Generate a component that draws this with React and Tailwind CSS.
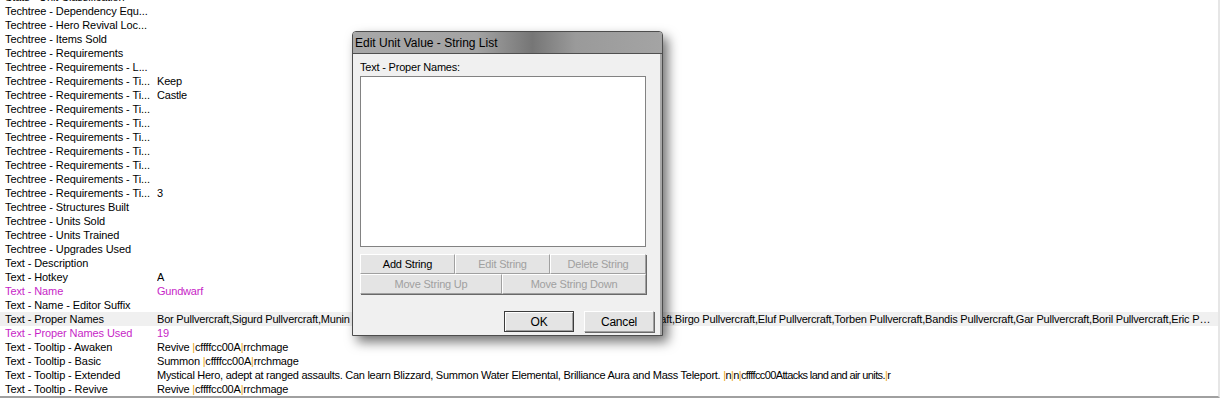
import React from "react";

const MAG = "text-[#c71fc7]";

function Piped({ text }) {
  const parts = text.split("|");
  return (
    <>
      {parts.map((p, i) => (
        <React.Fragment key={i}>
          {i > 0 && <span className="text-[#e8a317]">|</span>}
          {p}
        </React.Fragment>
      ))}
    </>
  );
}

const rows = [
  ["Stats - Unit Classification", ""],
  ["Techtree - Dependency Equ...", ""],
  ["Techtree - Hero Revival Loc...", ""],
  ["Techtree - Items Sold", ""],
  ["Techtree - Requirements", ""],
  ["Techtree - Requirements - L...", ""],
  ["Techtree - Requirements - Ti...", "Keep"],
  ["Techtree - Requirements - Ti...", "Castle"],
  ["Techtree - Requirements - Ti...", ""],
  ["Techtree - Requirements - Ti...", ""],
  ["Techtree - Requirements - Ti...", ""],
  ["Techtree - Requirements - Ti...", ""],
  ["Techtree - Requirements - Ti...", ""],
  ["Techtree - Requirements - Ti...", ""],
  ["Techtree - Requirements - Ti...", "3"],
  ["Techtree - Structures Built", ""],
  ["Techtree - Units Sold", ""],
  ["Techtree - Units Trained", ""],
  ["Techtree - Upgrades Used", ""],
  ["Text - Description", ""],
  ["Text - Hotkey", "A"],
  ["Text - Name", "Gundwarf", "mag"],
  ["Text - Name - Editor Suffix", ""],
  [
    "Text - Proper Names",
    "Bor Pullvercraft,Sigurd Pullvercraft,Munin Pullvercraft,Thorin Pullvercraft,Dvalin Pullvercraft,Fundin Pullvercraft,Birgo Pullvercraft,Eluf Pullvercraft,Torben Pullvercraft,Bandis Pullvercraft,Gar Pullvercraft,Boril Pullvercraft,Eric Pullvercraft,Hagen Pullvercraft,Ulf Pullvercraft",
    "sel",
  ],
  ["Text - Proper Names Used", "19", "mag"],
  ["Text - Tooltip - Awaken", "Revive |cffffcc00A|rrchmage"],
  ["Text - Tooltip - Basic", "Summon |cffffcc00A|rrchmage"],
  ["Text - Tooltip - Extended", "", "ext"],
  ["Text - Tooltip - Revive", "Revive |cffffcc00A|rrchmage"],
];

function Btn({ children, disabled, className = "" }) {
  return (
    <div
      className={
        "flex items-center justify-center h-[20px] bg-[#e4e4e4] border border-t-white border-l-white border-r-[#a0a0a0] border-b-[#a0a0a0] shadow-[1px_1px_0_#696969] " +
        (disabled ? "text-[#a0a0a0] " : "text-black ") +
        className
      }
    >
      {children}
    </div>
  );
}

function Dialog() {
  return (
    <div className="absolute left-[352px] top-[31px] w-[311px] h-[305px] flex flex-col bg-[#f0f0f0] border border-[#4d4d4d] rounded-t-[4px] shadow-[5px_6px_12px_rgba(0,0,0,0.55)]">
      <div className="h-[22px] shrink-0 flex items-center pl-[2px] border-b border-[#505050] rounded-t-[3px] bg-[linear-gradient(to_right,#a8a8a8_0%,#a3a3a3_40%,#767676_58%,#9a9a9a_72%,#a4a4a4_100%)] text-[12px] tracking-normal text-black">
        Edit Unit Value - String List
      </div>
      <div className="flex-1 flex flex-col pl-[7px] pr-[6px] border-r-[2px] border-[#a8a8a8]">
        <div className="mt-[6px] h-[14px] leading-[14px]">Text - Proper Names:</div>
        <div className="mt-[2px] w-[286px] h-[171px] bg-white border border-[#828282]"></div>
        <div className="mt-[7px] w-[286px] flex flex-col">
          <div className="flex">
            <Btn className="w-[95px]">Add String</Btn>
            <Btn className="w-[95px]" disabled>Edit String</Btn>
            <Btn className="w-[96px]" disabled>Delete String</Btn>
          </div>
          <div className="flex">
            <Btn className="w-[142px]" disabled>Move String Up</Btn>
            <Btn className="w-[144px]" disabled>Move String Down</Btn>
          </div>
        </div>
        <div className="mt-[17px] flex justify-end gap-[10px]">
          <div className="w-[70px] h-[21px] flex items-center justify-center bg-[#e4e4e4] border border-[#3c3c3c] shadow-[inset_1px_1px_0_#fff,inset_-1px_-1px_0_#a0a0a0] text-[12px]">
            OK
          </div>
          <div className="w-[70px] h-[21px] flex items-center justify-center bg-[#e4e4e4] border border-t-white border-l-white border-r-[#a0a0a0] border-b-[#a0a0a0] shadow-[1px_1px_0_#696969] text-[12px]">
            Cancel
          </div>
        </div>
      </div>
    </div>
  );
}

export default function App() {
  return (
    <div className="relative w-[1220px] h-[398px] overflow-hidden bg-white text-black font-['Liberation_Sans',Arial,sans-serif] text-[11px] tracking-[-0.2px]">
      <div className="h-[398px] border-r-2 border-b-2 border-r-[#e6e6e6] border-b-[#a0a0a0] overflow-hidden">
        <div className="-mt-[10px] flex flex-col">
          {rows.map(([a, b, k], i) => (
            <div
              key={i}
              className={
                "flex h-[14px] leading-[14px] whitespace-nowrap " +
                (k === "sel" ? "bg-[#f0f0f0] " : "") +
                (k === "mag" ? MAG : "")
              }
            >
              <div className="w-[157px] shrink-0 pl-[5px] overflow-hidden tracking-[-0.1px]">{a}</div>
              <div className="flex-1 min-w-0 overflow-hidden text-ellipsis pr-[3px]">
                {k === "ext" ? (
                  <>
                    <span className="tracking-[-0.27px]">
                      Mystical Hero, adept at ranged assaults. Can learn Blizzard, Summon Water Elemental, Brilliance Aura and Mass Teleport.{" "}
                    </span>
                    <span className="tracking-[-0.62px]">
                      <Piped text="|n|n|cffffcc00Attacks land and air units.|r" />
                    </span>
                  </>
                ) : (
                  <Piped text={b} />
                )}
              </div>
            </div>
          ))}
        </div>
      </div>
      <Dialog />
    </div>
  );
}
